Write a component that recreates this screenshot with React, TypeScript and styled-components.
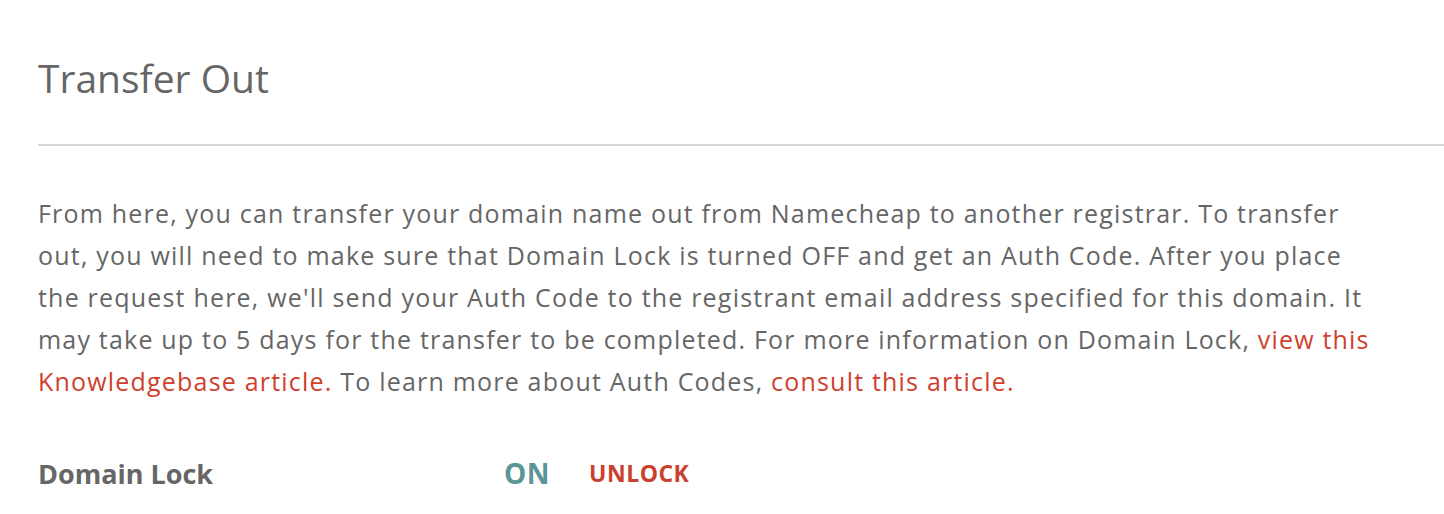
import React from "react";
import styled, { createGlobalStyle } from "styled-components";

const Global = createGlobalStyle`
  html, body { margin: 0; padding: 0; background: #fff; }
  body { font-family: "Open Sans", Lato, sans-serif; color: #666; }
`;

const Page = styled.div`
  padding: 52px 0 0 38px;
`;

const Title = styled.h1`
  margin: 0;
  font-family: "Open Sans", sans-serif;
  font-weight: 400;
  font-size: 39px;
  line-height: 52px;
  color: #666;
`;

const Divider = styled.hr`
  margin: 40px 0 0 0;
  border: 0;
  height: 2px;
  background: #d8d8d8;
`;

const Text = styled.p`
  margin: 46px 0 0 0;
  max-width: 1400px;
  font-size: 25px;
  line-height: 42px;
  letter-spacing: 1.2px;
  color: #666;
`;

const Link = styled.a`
  color: #d0402c;
  text-decoration: none;
`;

const Row = styled.div`
  display: grid;
  grid-template-columns: 466px auto auto 1fr;
  align-items: center;
  margin-top: 52px;
`;

const Label = styled.div`
  font-weight: 700;
  font-size: 27px;
  color: #666;
`;

const Status = styled.span<{ $color: string; $gap?: number; $size: number }>`
  font-weight: 700;
  font-size: ${(p) => p.$size}px;
  letter-spacing: 0.5px;
  text-transform: uppercase;
  color: ${(p) => p.$color};
  margin-right: ${(p) => p.$gap ?? 0}px;
`;

export default function App() {
  return (
    <>
      <Global />
      <Page>
        <Title>Transfer Out</Title>
        <Divider />
        <Text>
          From here, you can transfer your domain name out from Namecheap to another registrar. To transfer
          <br />
          out, you will need to make sure that Domain Lock is turned OFF and get an Auth Code. After you place
          <br />
          the request here, we'll send your Auth Code to the registrant email address specified for this domain. It
          <br />
          may take up to 5 days for the transfer to be completed. For more information on Domain Lock,{" "}
          <Link href="#">
            view this
            <br />
            Knowledgebase article.
          </Link>{" "}
          To learn more about Auth Codes, <Link href="#">consult this article.</Link>
        </Text>
        <Row>
          <Label>Domain Lock</Label>
          <Status $color="#5b9595" $gap={39} $size={28}>ON</Status>
          <Status $color="#c9402f" $size={23}>Unlock</Status>
        </Row>
      </Page>
    </>
  );
}
